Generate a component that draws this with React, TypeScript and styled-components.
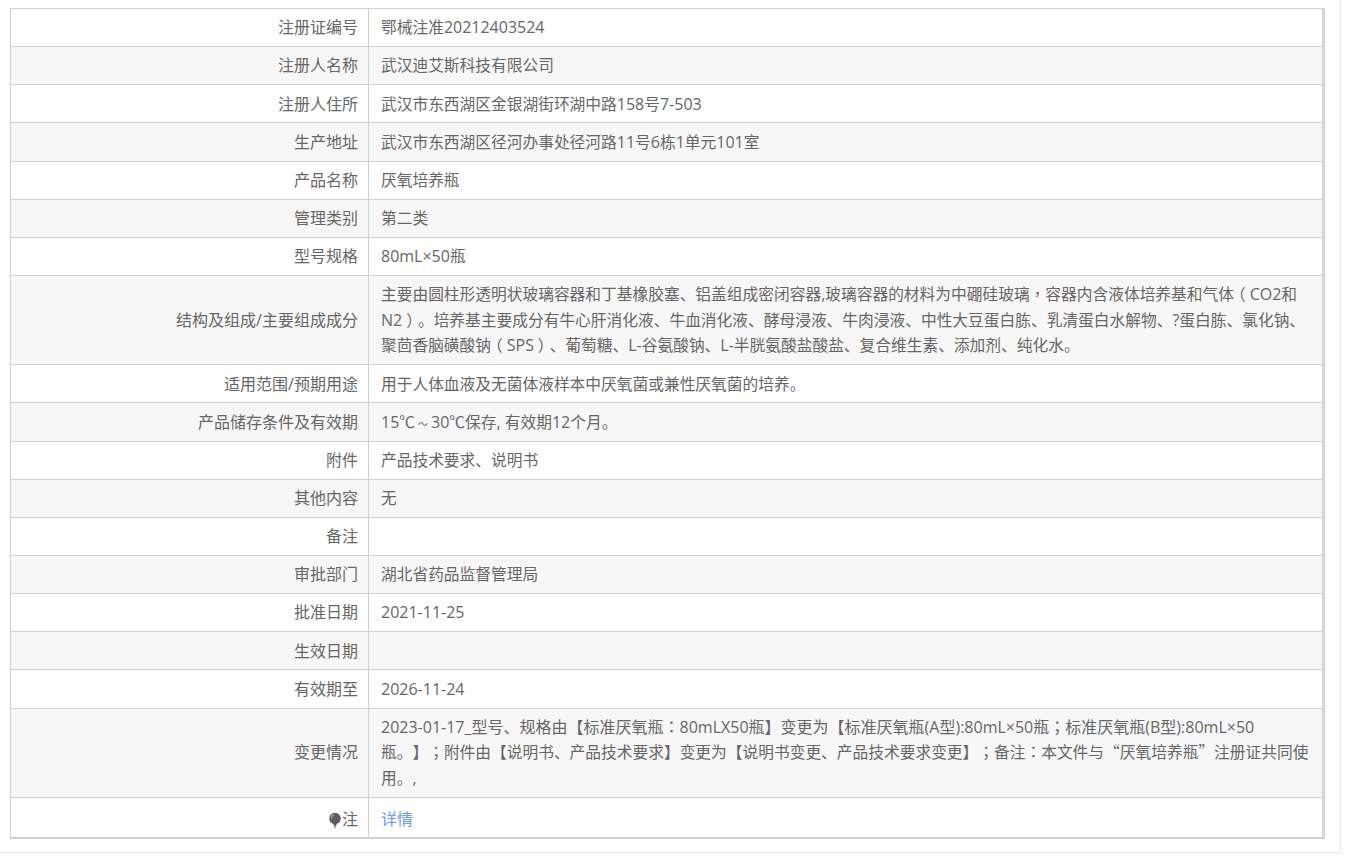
import React from "react";
import styled, { createGlobalStyle } from "styled-components";

const Global = createGlobalStyle`
  html, body { margin: 0; padding: 0; background: #fff; }
  body { font-family: "Open Sans", "Noto Sans CJK SC", sans-serif; }
`;

const Page = styled.div`
  width: 1341px;
  height: 853px;
  box-sizing: border-box;
  border-right: 1px solid #e8e8e8;
  border-bottom: 1px solid #e8e8e8;
  padding: 8px 0 0 10px;
`;

const Frame = styled.div`
  width: 1315px;
  box-sizing: border-box;
  background: #dcdcdc;
  border: solid #d0d0d0;
  border-width: 0 1px 1px 0;
  padding-right: 1px;
`;

const Table = styled.table`
  width: 100%;
  table-layout: fixed;
  border-collapse: collapse;
  font-size: 16px;
  line-height: 25.6px;
  color: #666;
  text-spacing-trim: space-all;
`;

const Row = styled.tr<{ $alt: boolean }>`
  background: ${(p) => (p.$alt ? "#f7f7f7" : "#fff")};
`;

const Label = styled.th`
  box-sizing: border-box;
  border: 1px solid #d0d0d0;
  padding: 6.3px 10px 5.25px;
  text-align: right;
  font-weight: 400;
`;

const Value = styled.td<{ $loose?: boolean }>`
  border: 1px solid #d0d0d0;
  padding: 6.3px 10px 5.25px 12px;
  text-align: left;
  font-size: ${(p) => (p.$loose ? "16px" : "15.73px")};
`;

const NoteValue = styled(Value)`
  padding-top: 9.4px;
  padding-bottom: 4.2px;
`;

const NoteLabel = styled(Label)`
  padding-top: 8.6px;
  padding-bottom: 5px;
`;

const Bulb = styled.svg`
  width: 14px;
  height: 16px;
  vertical-align: -3px;
`;

const Link = styled.a`
  color: #6a9bf0;
  text-decoration: none;
`;

const Tight = styled.span`
  font-size: 15.73px;
`;

/* Latin runs keep the full size even where the CJK text is set a touch smaller. */
const Latin = styled.span`
  font-size: 16px;
  line-height: 0;
`;

/* Full-width punctuation the reference's font draws centred in its cell. */
const Centered = styled.span`
  font-family: "Noto Sans CJK TC", sans-serif;
  line-height: 0;
`;

const Paren = styled.span<{ $open: boolean }>`
  font-family: "Noto Sans CJK SC", sans-serif;
  line-height: 0;
  margin: ${(p) => (p.$open ? "0 0.25em 0 -0.25em" : "0 -0.25em 0 0.25em")};
`;

const Quote = styled.span`
  font-family: "Noto Sans CJK SC", sans-serif;
  line-height: 0;
`;

const Tilde = styled.span`
  font-size: 10px;
  line-height: 0;
  padding: 0 3px;
`;

function Rich({ text }: { text: string }) {
  const parts = text.split(/([，：；（）“”～]|[A-Za-z0-9\-_.,:()×?\/ ]+)/);
  return (
    <>
      {parts.map((t, i) => {
        if (!t) return null;
        if (t === "～") return <Tilde key={i}>{t}</Tilde>;
        if (t === "（" || t === "）") return <Paren key={i} $open={t === "（"}>{t}</Paren>;
        if (t === "“" || t === "”") return <Quote key={i}>{t}</Quote>;
        if (t === "，" || t === "：" || t === "；") return <Centered key={i}>{t}</Centered>;
        if (/^[A-Za-z0-9\-_.,:()×?\/ ]+$/.test(t)) return <Latin key={i}>{t}</Latin>;
        return <React.Fragment key={i}>{t}</React.Fragment>;
      })}
    </>
  );
}

const rows: [string, string][] = [
  ["注册证编号", "鄂械注准20212403524"],
  ["注册人名称", "武汉迪艾斯科技有限公司"],
  ["注册人住所", "武汉市东西湖区金银湖街环湖中路158号7-503"],
  ["生产地址", "武汉市东西湖区径河办事处径河路11号6栋1单元101室"],
  ["产品名称", "厌氧培养瓶"],
  ["管理类别", "第二类"],
  ["型号规格", "80mL×50瓶"],
  ["结构及组成/主要组成成分", "主要由圆柱形透明状玻璃容器和丁基橡胶塞、铝盖组成密闭容器,玻璃容器的材料为中硼硅玻璃，容器内含液体培养基和气体（CO2和N2）。培养基主要成分有牛心肝消化液、牛血消化液、酵母浸液、牛肉浸液、中性大豆蛋白胨、乳清蛋白水解物、?蛋白胨、氯化钠、聚茴香脑磺酸钠（SPS）、葡萄糖、L-谷氨酸钠、L-半胱氨酸盐酸盐、复合维生素、添加剂、纯化水。"],
  ["适用范围/预期用途", "用于人体血液及无菌体液样本中厌氧菌或兼性厌氧菌的培养。"],
  ["产品储存条件及有效期", "15℃～30℃保存, 有效期12个月。"],
  ["附件", "产品技术要求、说明书"],
  ["其他内容", "无"],
  ["备注", ""],
  ["审批部门", "湖北省药品监督管理局"],
  ["批准日期", "2021-11-25"],
  ["生效日期", ""],
  ["有效期至", "2026-11-24"],
];

const changeLead = "2023-01-17_型号、规格由【标准厌氧瓶：80mLX50瓶】变更为【标准厌氧瓶(A型):80mL×50瓶；标准厌氧瓶(B型):80mL×50";
const changeRest = "瓶。】；附件由【说明书、产品技术要求】变更为【说明书变更、产品技术要求变更】；备注：本文件与“厌氧培养瓶”注册证共同使用。,";

export default function App() {
  return (
    <>
      <Global />
      <Page>
        <Frame>
          <Table>
            <colgroup>
              <col width={358} />
              <col />
            </colgroup>
            <tbody>
              {rows.map(([k, v], i) => (
                <Row key={k} $alt={i % 2 === 1}>
                  <Label><Rich text={k} /></Label>
                  <Value><Rich text={v} /></Value>
                </Row>
              ))}
              <Row $alt>
                <Label>变更情况</Label>
                <Value $loose>
                  <Rich text={changeLead} />
                  <Tight><Rich text={changeRest} /></Tight>
                </Value>
              </Row>
              <Row $alt={false}>
                <NoteLabel>
                  <Bulb viewBox="0 0 14 16">
                    <circle cx="7" cy="6.5" r="5.8" fill="#5f5f63" />
                    <path d="M3.2 6.6A4 4 0 0 1 6 2.8" stroke="#a9adb3" strokeWidth="1.2" fill="none" />
                    <path d="M5.2 11.5h3.6L8 14H6z" fill="#5f5f63" />
                    <path d="M6 14.6h2V16H6z" fill="#9a9a9a" />
                  </Bulb>
                  注
                </NoteLabel>
                <NoteValue $loose>
                  <Link href="#">详情</Link>
                </NoteValue>
              </Row>
            </tbody>
          </Table>
        </Frame>
      </Page>
    </>
  );
}
